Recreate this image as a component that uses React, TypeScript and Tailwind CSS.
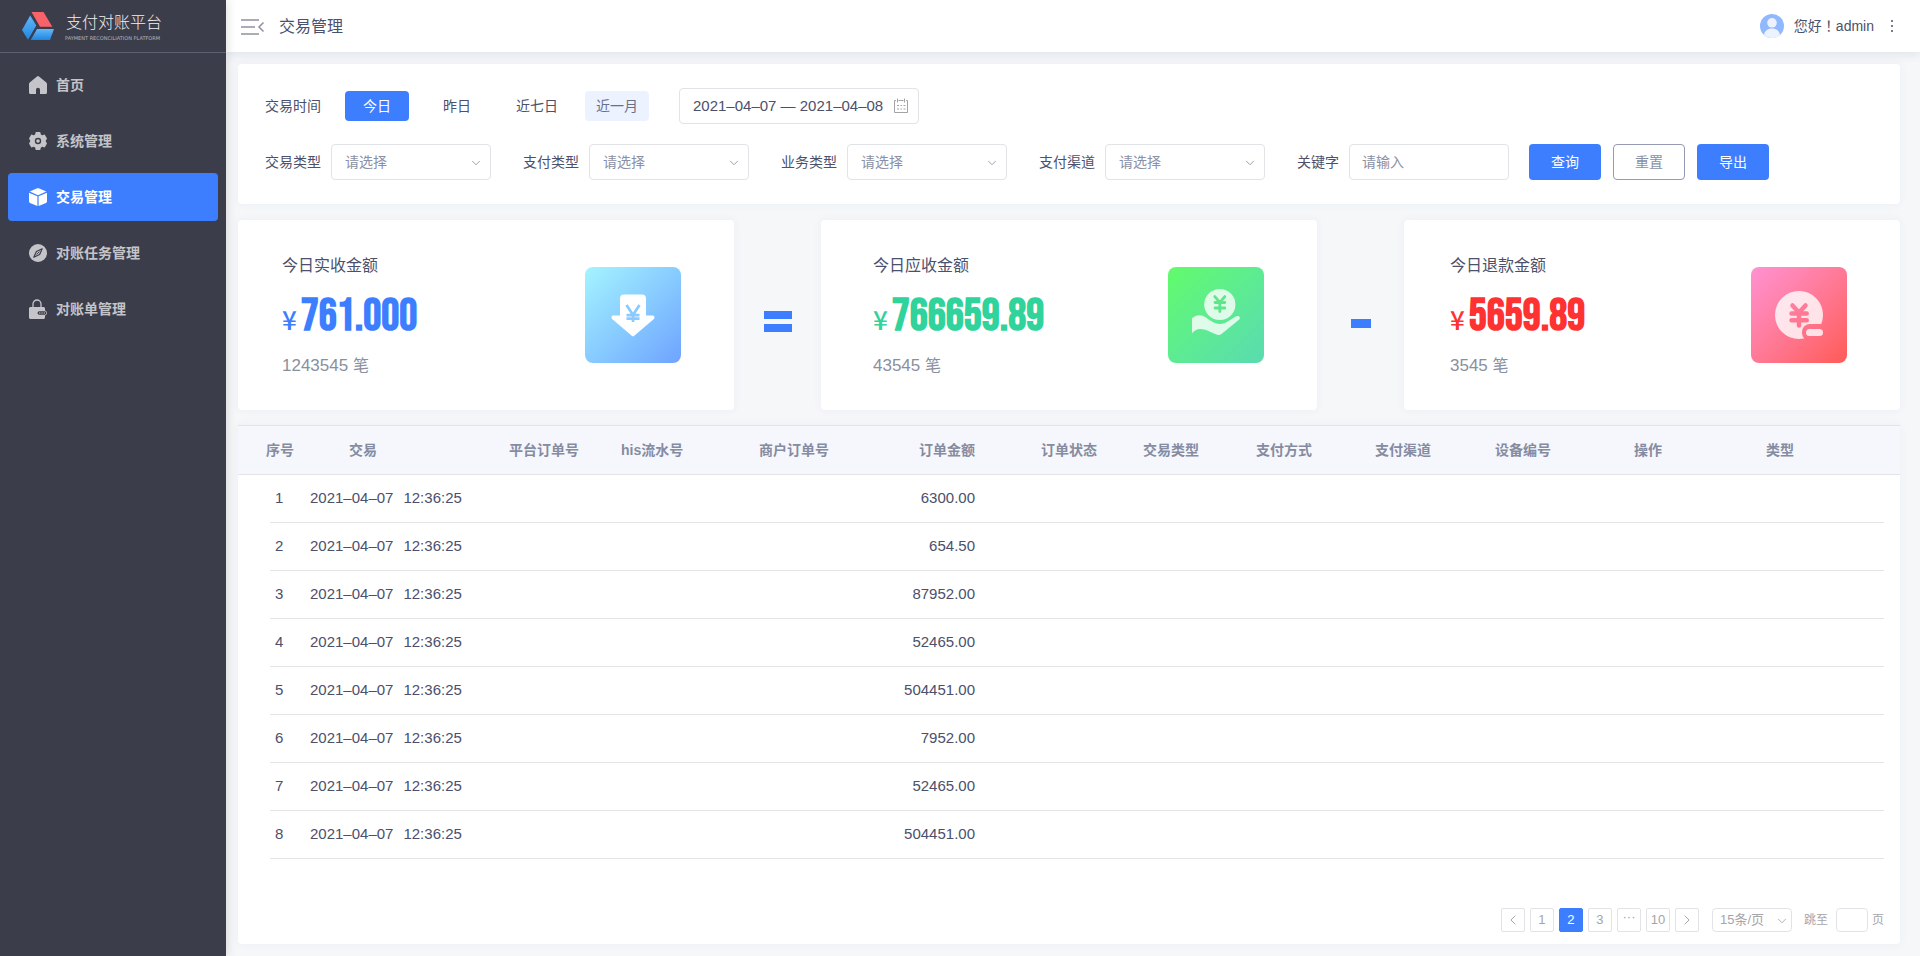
import { type ReactNode } from "react";
import { clsx } from "clsx";
import { ChevronDown, ChevronLeft, ChevronRight } from "lucide-react";

const NAV: { label: string; icon: ReactNode; active?: boolean }[] = [
  { label: "首页", icon: <HomeIcon /> },
  { label: "系统管理", icon: <GearIcon /> },
  { label: "交易管理", icon: <CubeIcon />, active: true },
  { label: "对账任务管理", icon: <CompassIcon /> },
  { label: "对账单管理", icon: <LockIcon /> },
];

const FILTERS = ["交易类型", "支付类型", "业务类型", "支付渠道"];

const ROWS = [
  "6300.00",
  "654.50",
  "87952.00",
  "52465.00",
  "504451.00",
  "7952.00",
  "52465.00",
  "504451.00",
];

const TRAILING_COLUMNS = [
  "订单状态",
  "交易类型",
  "支付方式",
  "支付渠道",
  "设备编号",
  "操作",
  "类型",
];

function HomeIcon() {
  return (
    <svg width="18" height="18" viewBox="0 0 18 18" fill="currentColor">
      <path d="M8 .4a1.6 1.6 0 0 1 2 0l7.300 6.200c.5.4.7.9.7 1.500v8.400c0 .8-.6 1.500-1.500 1.500H11v-4.200a2 2 0 0 0-4 0V18H1.500C.7 18 0 17.300 0 16.500V8.100c0-.6.3-1.100.7-1.500z" />
    </svg>
  );
}

function GearIcon() {
  return (
    <svg width="18" height="18" viewBox="0 0 18 18" fill="currentColor">
      <path
        fillRule="evenodd"
        d="M6.800 0h4.400l.7 2.500 1.300.8L15.700 2.600 18 6.400 16.600 9 18 11.600l-2.300 3.800-2.500-.7-1.300.8-.7 2.500H6.800l-.7-2.500-1.300-.8-2.500.7L0 11.600 1.400 9 0 6.400l2.300-3.800 2.500.7 1.300-.8zM9 5.800a3.200 3.200 0 1 0 0 6.400 3.200 3.200 0 0 0 0-6.400z"
      />
      <circle cx="9" cy="9" r="1.800" />
    </svg>
  );
}

function CubeIcon() {
  return (
    <svg width="18" height="18" viewBox="0 0 18 18" fill="currentColor">
      <path d="M8.200.3a2 2 0 0 1 1.600 0L17.300 3.600 9 7.200.7 3.600z" />
      <path d="M0 4.700l8.400 3.600V18L1 14.900c-.6-.3-1-.8-1-1.400zM18 4.700L9.600 8.300V18l7.400-3.100c.6-.3 1-.8 1-1.400z" />
    </svg>
  );
}

function CompassIcon() {
  return (
    <svg width="18" height="18" viewBox="0 0 18 18">
      <circle cx="9" cy="9" r="9" fill="currentColor" />
      <path
        d="M13.200 4.800L10.600 10.500 4.800 13.200 7.400 7.500z"
        fill="none"
        stroke="#3c3d4a"
        strokeWidth="1.200"
        strokeLinejoin="round"
      />
      <path d="M7.500 10.500l3-3" stroke="#3c3d4a" strokeWidth="1" />
    </svg>
  );
}

function LockIcon() {
  return (
    <svg width="18" height="20" viewBox="0 0 18 20">
      <path
        d="M4 9V5a4 4 0 0 1 8 0v4"
        fill="none"
        stroke="currentColor"
        strokeWidth="1.300"
      />
      <path
        d="M1.500 8h13C15.300 8 16 8.700 16 9.500V11.500c1.200.3 2 1.300 2 2.500s-.8 2.200-2 2.500v2c0 .8-.7 1.500-1.500 1.500h-13C.7 20 0 19.300 0 18.500v-9C0 8.700.7 8 1.500 8z"
        fill="currentColor"
      />
      <rect x="8.500" y="12.200" width="8.800" height="3.600" rx="1.800" fill="#3c3d4a" />
      <path d="M10 14h6" stroke="currentColor" strokeWidth="1" strokeDasharray="1.400 .9" />
    </svg>
  );
}

function Logo() {
  return (
    <svg width="32" height="28" viewBox="0 0 32 28">
      <defs>
        <linearGradient id="logo-blue" x1="0" y1="0" x2="0" y2="1">
          <stop offset="0" stopColor="#63b8f8" />
          <stop offset="1" stopColor="#1f85e0" />
        </linearGradient>
      </defs>
      <path d="M9.500 0H21.500L30.300 14.700H18z" fill="#f8636b" />
      <path d="M8.200 3.500L14.300 13.600 6 27.700 0 18z" fill="url(#logo-blue)" />
      <path d="M15 17H32L28 28H8.700z" fill="url(#logo-blue)" />
    </svg>
  );
}

function FoldIcon() {
  return (
    <svg width="24" height="16" viewBox="0 0 24 16" fill="none" stroke="#8d92a1" strokeWidth="1.500">
      <path d="M0 1h18M0 8h14M0 15h18M22.500 3.500L18 8l4.500 4.500" />
    </svg>
  );
}

function CalendarIcon() {
  return (
    <svg width="16" height="16" viewBox="0 0 16 16" fill="none" stroke="#a3a3a8" strokeWidth="1">
      <path d="M3 2.500H1.500v12h13v-12H13M5.500 2.500h5M4.500.5v4M11.500.5v4" />
      <path d="M4 7.500h2M7.500 7.500h1.500M10.500 7.500h2M4 11h2M7.500 11h1.500M10.500 11h2" />
    </svg>
  );
}

function Avatar() {
  return (
    <svg width="24" height="24" viewBox="0 0 24 24">
      <circle cx="12" cy="12" r="12" fill="#8fb8ff" />
      <circle cx="12" cy="8.800" r="4.800" fill="#ecf2ff" />
      <path d="M4 21c.6-4 3.400-6.500 8-6.500s7.400 2.500 8 6.500a12 12 0 0 1-16 0z" fill="#ecf2ff" />
    </svg>
  );
}

function ReceiveIcon() {
  return (
    <svg width="96" height="96" viewBox="0 0 96 96">
      <path
        d="M39 27.500h18a4 4 0 0 1 4 4v17h6.500c2 0 2.700 2 1.400 3.400L49.500 68.500a2 2 0 0 1-3 0L27.100 51.900c-1.300-1.400-.6-3.400 1.400-3.400H35v-17a4 4 0 0 1 4-4z"
        fill="#fff"
      />
      <path
        d="M41.500 38l6.500 10 6.500-10M48 47v8M41.500 48.200h13M41.500 51.700h13"
        fill="none"
        stroke="#8acaff"
        strokeWidth="2.700"
      />
    </svg>
  );
}

function HandCoinIcon() {
  return (
    <svg width="96" height="96" viewBox="0 0 96 96">
      <g fill="#fff" fillOpacity=".8">
        <circle cx="51.800" cy="37.500" r="15.600" />
        <path d="M24 51.200c3-2.600 7-3.900 10.500-2.500 6 2.500 10 8.300 17.500 8.300 6 0 11.500-5.500 16.500-7.800 2.500-1 4.500 1.300 2.700 3.300L53.500 67c-1.400 1.200-3.500 1.200-5.200.5C42 65 38 62 32 62c-3 0-6 2-8 4.200z" />
      </g>
      <path
        d="M46.800 29.600l5 5.800 5-5.800M51.800 35.400v9.200M47 35.500h9.800M47 41h9.800"
        fill="none"
        stroke="#5fe68b"
        strokeWidth="2.800"
        strokeLinecap="round"
      />
    </svg>
  );
}

function RefundIcon() {
  return (
    <svg width="96" height="96" viewBox="0 0 96 96">
      <mask id="refund-cut">
        <rect width="96" height="96" fill="#fff" />
        <rect x="51" y="57" width="34" height="17" rx="8" fill="#000" />
        <path
          d="M41.500 38.500l6.500 7 6.500-7M48 46v12.500M40.500 46.400h15.200M40.500 53.200h15.200"
          fill="none"
          stroke="#000"
          strokeWidth="4.500"
          strokeLinecap="round"
        />
      </mask>
      <circle cx="48" cy="48" r="24" fill="#fff" fillOpacity=".8" mask="url(#refund-cut)" />
      <rect x="55" y="62" width="17" height="7" rx="3.500" fill="#fff" fillOpacity=".8" />
    </svg>
  );
}

function Sidebar() {
  return (
    <aside className="z-10 w-[226px] shrink-0 bg-[#3c3d4a] shadow-[0_0_10px_rgba(60,61,74,0.2)]">
      <div className="flex h-[53px] items-center gap-[11px] border-b border-[#5d5f73] pl-[22px]">
        <Logo />
        <div>
          <div className="pl-px text-base leading-6 font-light text-[#f0f0f3]">支付对账平台</div>
          <div className="font-['DejaVu_Sans',sans-serif] text-[5px] leading-[6px] whitespace-nowrap text-[#b4b5bb]">
            PAYMENT RECONCILIATION PLATFORM
          </div>
        </div>
      </div>
      <nav className="flex flex-col gap-2 p-2">
        {NAV.map((item) => (
          <a
            key={item.label}
            href="#"
            className={clsx(
              "flex h-12 items-center gap-[9px] rounded px-[21px] text-sm font-bold",
              item.active ? "bg-[#3d7eff] text-white" : "text-[#c4c4c9]",
            )}
          >
            {item.icon}
            {item.label}
          </a>
        ))}
      </nav>
    </aside>
  );
}

function Header() {
  return (
    <header className="flex h-[52px] items-center justify-between bg-white pr-6 pl-[15px] shadow-[0_2px_10px_rgba(60,70,110,0.12)]">
      <div className="flex items-center gap-3.5 pt-0.5">
        <button aria-label="收起菜单">
          <FoldIcon />
        </button>
        <h1 className="text-base">交易管理</h1>
      </div>
      <div className="flex items-center text-sm">
        <Avatar />
        <span className="ml-2.5 font-['Liberation_Sans','Noto_Sans_CJK_TC',sans-serif]">
          您好！admin
        </span>
        <button aria-label="更多" className="ml-3.5">
          <svg width="8" height="14" viewBox="0 0 8 14" fill="#4b506b">
            <circle cx="4" cy="2" r="1" />
            <circle cx="4" cy="7" r="1" />
            <circle cx="4" cy="12" r="1" />
          </svg>
        </button>
      </div>
    </header>
  );
}

function FilterPanel() {
  return (
    <section className="flex flex-col gap-5 rounded-sm bg-white py-6 pl-[27px] text-sm shadow-[0_0_10px_rgba(60,70,110,0.05)]">
      <div className="flex items-center">
        <span className="w-20">交易时间</span>
        <div className="flex gap-4">
          <button className="h-[30px] w-16 rounded bg-[#3d7eff] text-white">今日</button>
          <button className="h-[30px] w-16 rounded">昨日</button>
          <button className="h-[30px] w-16 rounded">近七日</button>
          <button className="h-[30px] w-16 rounded bg-[#ecf2ff] text-[#6b7089]">近一月</button>
        </div>
        <label className="ml-[30px] flex h-9 w-60 items-center rounded border border-[#e2e3e6] pr-[9px] pl-[13px]">
          <input
            aria-label="交易时间范围"
            className="min-w-0 flex-1 text-[15px] outline-none"
            defaultValue="2021–04–07 — 2021–04–08"
          />
          <CalendarIcon />
        </label>
      </div>
      <div className="flex items-center">
        {FILTERS.map((name) => (
          <label key={name} className="mr-8 flex items-center gap-2.5">
            {name}
            <span className="relative">
              <select className="h-9 w-40 appearance-none rounded border border-[#e2e3e6] bg-white pl-[13px] text-[#8a90a6]">
                <option>请选择</option>
              </select>
              <ChevronDown
                size={14}
                strokeWidth={1.5}
                className="pointer-events-none absolute top-3 right-2 text-[#8d92a1]"
              />
            </span>
          </label>
        ))}
        <label className="mr-5 flex items-center gap-2.5">
          关键字
          <input
            placeholder="请输入"
            className="h-9 w-40 rounded border border-[#e2e3e6] pl-3 placeholder:text-[#8a90a6]"
          />
        </label>
        <div className="flex gap-3">
          <button className="h-9 w-[72px] rounded bg-[#3d7eff] text-white">查询</button>
          <button className="h-9 w-[72px] rounded border border-[#959bb3] text-[#8a90a6]">重置</button>
          <button className="h-9 w-[72px] rounded bg-[#3d7eff] text-white">导出</button>
        </div>
      </div>
    </section>
  );
}

interface StatProps {
  title: string;
  amount: string;
  count: string;
  className: string;
  amountClass: string;
  tileClass: string;
  icon: ReactNode;
}

function StatCard({ title, amount, count, className, amountClass, tileClass, icon }: StatProps) {
  return (
    <div
      className={clsx(
        "flex h-[190px] items-center justify-between rounded-sm bg-white pr-[53px] shadow-[0_0_10px_rgba(60,70,110,0.05)]",
        className,
      )}
    >
      <div className="pt-0.5">
        <div className="text-base leading-6">{title}</div>
        <div className={clsx("flex h-[76px] items-baseline gap-1 pt-px", amountClass)}>
          <span className="font-['Noto_Sans_CJK_SC',sans-serif] text-[26px] font-medium">¥</span>
          <span className="font-['Bebas_Neue','Roboto_Condensed','Liberation_Sans_Narrow',sans-serif] text-[45px] leading-[76px] font-bold">
            {amount}
          </span>
        </div>
        <div className="text-[17px] leading-6 text-[#8a8f9e]">
          {count} <span className="text-base">笔</span>
        </div>
      </div>
      <div className={clsx("size-24 rounded-lg bg-linear-to-br", tileClass)}>{icon}</div>
    </div>
  );
}

function Stats() {
  return (
    <section className="grid grid-cols-[1fr_87px_1fr_87px_1fr]">
      <StatCard
        title="今日实收金额"
        amount="761.000"
        count="1243545"
        className="pl-11"
        amountClass="text-[#3d7eff]"
        tileClass="from-[#a5f4ff] to-[#6fa3ff]"
        icon={<ReceiveIcon />}
      />
      <div className="flex flex-col items-center justify-center gap-[5px] pt-3">
        <div className="h-2 w-7 bg-[#3d7eff]" />
        <div className="h-2 w-7 bg-[#3d7eff]" />
      </div>
      <StatCard
        title="今日应收金额"
        amount="766659.89"
        count="43545"
        className="pl-[52px]"
        amountClass="text-[#30d39b]"
        tileClass="from-[#62fb69] to-[#5adbb0]"
        icon={<HandCoinIcon />}
      />
      <div className="flex items-center justify-center pt-4">
        <div className="h-[9px] w-5 bg-[#3d7eff]" />
      </div>
      <StatCard
        title="今日退款金额"
        amount="5659.89"
        count="3545"
        className="pl-[46px]"
        amountClass="text-[#ff3232]"
        tileClass="from-[#ff92d2] to-[#ff5a55]"
        icon={<RefundIcon />}
      />
    </section>
  );
}

function OrderTable() {
  return (
    <table className="w-full table-fixed border-separate border-spacing-0 text-left whitespace-nowrap">
      <colgroup>
        <col className="w-8" />
        <col className="w-10" />
        <col className="w-[199px]" />
        <col className="w-[112px]" />
        <col className="w-[138px]" />
        <col className="w-[120px]" />
        <col className="w-[162px]" />
        <col className="w-[102px]" />
        <col className="w-[113px]" />
        <col className="w-[119px]" />
        <col className="w-[120px]" />
        <col className="w-[139px]" />
        <col className="w-[132px]" />
        <col className="w-[118px]" />
        <col className="w-4" />
      </colgroup>
      <thead className="bg-[#f5f7fc] text-sm text-[#858ba1] [&_th]:h-[50px] [&_th]:border-y [&_th]:border-[#e3e4e6] [&_th]:font-bold">
        <tr>
          <th colSpan={2} className="pl-7">序号</th>
          <th className="pl-[39px]">交易</th>
          <th>平台订单号</th>
          <th>his流水号</th>
          <th>商户订单号</th>
          <th className="pr-[66px] text-right">订单金额</th>
          {TRAILING_COLUMNS.map((name) => (
            <th key={name} colSpan={name === "类型" ? 2 : 1}>
              {name}
            </th>
          ))}
        </tr>
      </thead>
      <tbody className="text-[15px]">
        {ROWS.map((amount, i) => (
          <tr key={i} className="h-12 [&>td:not(:first-child):not(:last-child)]:border-b [&>td]:border-[#e3e4e6]">
            <td />
            <td className="pl-[5px]">{i + 1}</td>
            <td>
              2021–04–07<span className="ml-2.5">12:36:25</span>
            </td>
            <td />
            <td />
            <td />
            <td className="pr-[66px] text-right">{amount}</td>
            {TRAILING_COLUMNS.map((name) => (
              <td key={name} />
            ))}
            <td />
          </tr>
        ))}
      </tbody>
    </table>
  );
}

function PageButton({ children, active, label }: { children: ReactNode; active?: boolean; label?: string }) {
  return (
    <button
      aria-label={label}
      className={clsx(
        "flex size-6 items-center justify-center rounded-xs border text-[13px]",
        active ? "border-[#3d7eff] bg-[#3d7eff] text-white" : "border-[#e2e3e6]",
      )}
    >
      {children}
    </button>
  );
}

function Pagination() {
  return (
    <div className="mt-auto flex items-center justify-end pr-4 pb-3 text-xs text-[#a5a5aa]">
      <div className="flex gap-[5px]">
        <PageButton label="上一页">
          <ChevronLeft size={16} strokeWidth={1.5} />
        </PageButton>
        <PageButton>1</PageButton>
        <PageButton active>2</PageButton>
        <PageButton>3</PageButton>
        <PageButton label="更多页">
          <span className="pb-1.5">···</span>
        </PageButton>
        <PageButton>10</PageButton>
        <PageButton label="下一页">
          <ChevronRight size={16} strokeWidth={1.5} />
        </PageButton>
      </div>
      <span className="relative ml-[13px]">
        <select
          aria-label="每页条数"
          className="h-6 w-20 appearance-none rounded border border-[#e2e3e6] bg-white pl-[7px] text-[13px]"
        >
          <option>15条/页</option>
        </select>
        <ChevronDown
          size={14}
          strokeWidth={1.5}
          className="pointer-events-none absolute top-1.5 right-[3px]"
        />
      </span>
      <label className="ml-3 flex items-center">
        跳至
        <input className="mr-1 ml-2 h-6 w-8 rounded border border-[#e2e3e6]" />页
      </label>
    </div>
  );
}

export default function App() {
  return (
    <div className="flex min-h-screen bg-[#f5f7f9] font-['Liberation_Sans','Noto_Sans_CJK_SC',sans-serif] text-[#4b506b]">
      <Sidebar />
      <div className="flex min-w-0 flex-1 flex-col">
        <Header />
        <main className="flex flex-1 flex-col py-3 pr-5 pl-3">
          <FilterPanel />
          <div className="mt-4">
            <Stats />
          </div>
          <section className="mt-[15px] flex flex-1 flex-col rounded-sm bg-white shadow-[0_0_10px_rgba(60,70,110,0.05)]">
            <OrderTable />
            <Pagination />
          </section>
        </main>
      </div>
    </div>
  );
}
